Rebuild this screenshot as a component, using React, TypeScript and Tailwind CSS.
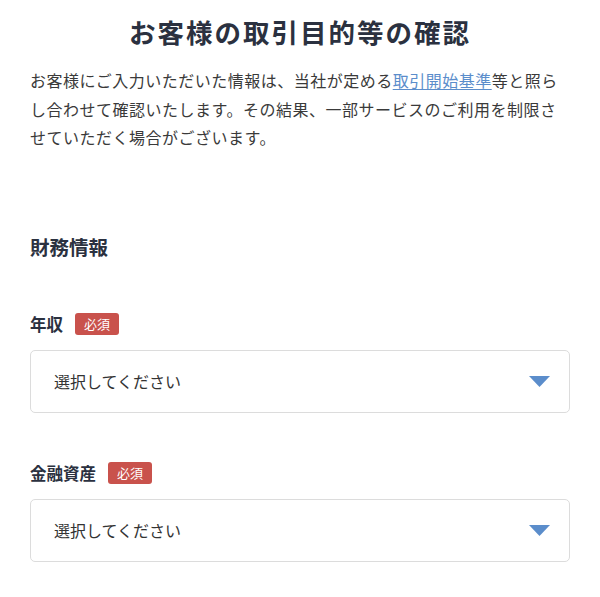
const jp = "font-['Noto_Sans_CJK_JP','Noto_Sans',sans-serif]";

const Required = () => (
  <span className="inline-flex h-[22px] w-[44px] items-center justify-center rounded-[3px] bg-[#c9524c] text-[13px] leading-none text-white">
    必須
  </span>
);

const SelectBox = () => (
  <div className="flex h-[63px] items-center justify-between rounded-[5px] border border-[#dcdcdc] bg-white pl-[23px] pr-[19px]">
    <span className="text-[16px] text-[#333]">選択してください</span>
    <svg width="21" height="11" viewBox="0 0 21 11">
      <path d="M0 0 H21 L10.5 11 Z" fill="#5b8dcb" />
    </svg>
  </div>
);

const Field = ({ label, className }: { label: string; className?: string }) => (
  <div className={className}>
    <div className="flex h-[22px] items-center gap-[12px]">
      <span className="text-[16.5px] font-bold leading-[22px] text-[#2b3140]">{label}</span>
      <Required />
    </div>
    <div className="mt-[15px]">
      <SelectBox />
    </div>
  </div>
);

export default function App() {
  return (
    <div className={`${jp} min-h-[597px] bg-white px-[30px] pt-[14px]`}>
      <h1 className="text-center text-[26.5px] font-bold leading-[36px] tracking-[2px] text-[#2b3140]">
        お客様の取引目的等の確認
      </h1>
      <p className="mt-4 text-[16px] leading-[28.5px] tracking-[0.5px] text-[#3a3a3a]">
        お客様にご入力いただいた情報は、当社が定める
        <a href="#" className="text-[#5b8dcb] underline underline-offset-2">
          取引開始基準
        </a>
        等と照らし合わせて確認いたします。その結果、一部サービスのご利用を制限させていただく場合がございます。
      </p>
      <h2 className="mt-[81px] text-[19.5px] font-bold leading-[28px] text-[#2b3140]">財務情報</h2>
      <Field label="年収" className="mt-[52px]" />
      <Field label="金融資産" className="mt-[49px]" />
    </div>
  );
}
